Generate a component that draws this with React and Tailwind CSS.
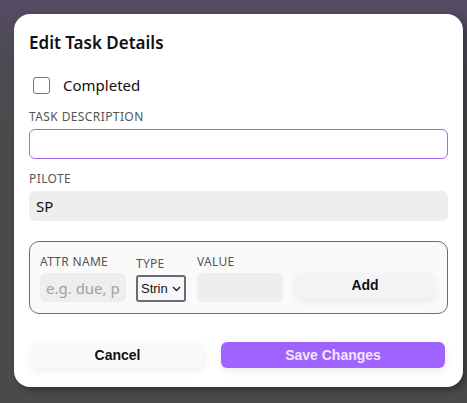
import React, { useState } from "react";

const EditTaskModal = () => {
  const [done, setDone] = useState(false);

  return (
    <div className="w-[467px] h-[403px] overflow-hidden bg-[linear-gradient(180deg,#544b63_0px,#4d4a55_60px,#4a4a4a_140px)]">
      <div className="ml-[14px] mt-[14px] w-[449px] rounded-[16px] bg-white px-[15px] pt-[17px] pb-[19px] shadow-[3px_3px_6px_rgba(0,0,0,0.35)] font-['Noto_Sans',sans-serif]">
        <h2 className="text-[17px] leading-6 font-semibold text-[#111]">Edit Task Details</h2>

        <label className="mt-[18px] flex h-6 items-center">
          <input
            type="checkbox"
            checked={done}
            onChange={() => setDone(!done)}
            className="ml-[4px] h-[17px] w-[17px] appearance-none rounded-[3px] border border-[#77727f] bg-white"
          />
          <span className="ml-[13px] text-[15px] text-[#111]">Completed</span>
        </label>

        <div className="mt-3 text-[12px] leading-4 tracking-[0.4px] text-[#555]">TASK DESCRIPTION</div>
        <input className="mt-1 block h-[30px] w-full rounded-[6px] border border-[#a06cf5] bg-white px-2 outline-none" />

        <div className="mt-3 text-[12px] leading-4 tracking-[0.4px] text-[#555]">PILOTE</div>
        <div className="mt-1 flex h-[30px] w-full items-center rounded-[6px] bg-[#eeeeee] px-[7px] text-[15px] text-[#111]">SP</div>

        <div className="mt-5 flex h-[73px] items-end rounded-[10px] border border-[#6d6d6d] bg-[#fafafa] pb-[11px] pl-[10px] pr-[13px]">
          <div className="flex flex-col">
            <span className="text-[12px] leading-4 tracking-[0.3px] text-[#555]">ATTR NAME</span>
            <input
              placeholder="e.g. due, priority"
              className="mt-[3px] h-[29px] w-[86px] rounded-[6px] bg-[#eeeeee] px-[6px] text-[15px] text-[#111] outline-none placeholder:text-[#a0a0a0]"
            />
          </div>
          <div className="ml-[10px] flex flex-col">
            <span className="text-[12px] leading-4 tracking-[0.3px] text-[#555]">TYPE</span>
            <div className="mt-[3px] flex h-[27px] w-[50px] items-center rounded-[3px] border-2 border-[#6b6b78] bg-[#f7f7fa] pl-[3px] font-['Liberation_Sans',sans-serif] text-[13px] text-[#111]">
              <span className="w-[29px] overflow-hidden whitespace-nowrap">Strin</span>
              <svg width="9" height="6" viewBox="0 0 9 6" className="ml-[2px]">
                <path d="M1 1l3.5 3.5L8 1" fill="none" stroke="#222" strokeWidth="1.4" />
              </svg>
            </div>
          </div>
          <div className="ml-[11px] flex flex-col">
            <span className="text-[12px] leading-4 tracking-[0.3px] text-[#555]">VALUE</span>
            <input className="mt-[3px] h-[29px] w-[86px] rounded-[6px] bg-[#eeeeee] px-[6px] text-[14px] outline-none" />
          </div>
          <button className="mb-[4px] ml-[13px] h-[25px] flex-1 rounded-[7px] bg-[#f4f4f4] font-['Liberation_Sans',sans-serif] text-[14px] font-bold text-[#111] shadow-[0_3px_8px_rgba(0,0,0,0.08)]">
            Add
          </button>
        </div>

        <div className="mt-[28px] flex">
          <button className="ml-[2px] h-[26px] w-[173px] rounded-[7px] bg-[#fafafa] font-['Liberation_Sans',sans-serif] text-[14px] font-bold text-[#111] shadow-[0_3px_8px_rgba(0,0,0,0.07)]">
            Cancel
          </button>
          <button className="ml-[17px] h-[26px] w-[224px] rounded-[6px] bg-[#a163ff] font-['Liberation_Sans',sans-serif] text-[14px] font-bold text-[#f1e8ff] shadow-[0_3px_8px_rgba(0,0,0,0.08)]">
            Save Changes
          </button>
        </div>
      </div>
    </div>
  );
};

export default function App() {
  return <EditTaskModal />;
}
